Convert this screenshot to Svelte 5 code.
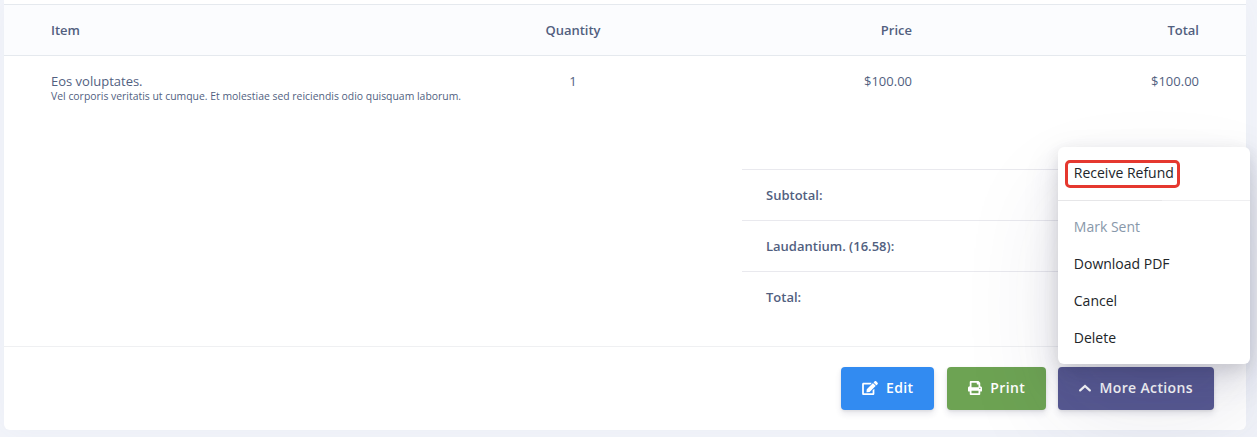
<script>
  const item = {
    name: 'Eos voluptates.',
    description: 'Vel corporis veritatis ut cumque. Et molestiae sed reiciendis odio quisquam laborum.',
    quantity: 1,
    price: '$100.00',
    total: '$100.00'
  };
  const totals = ['Subtotal:', 'Laudantium. (16.58):', 'Total:'];
  const menu = [
    { label: 'Mark Sent', disabled: true },
    { label: 'Download PDF' },
    { label: 'Cancel' },
    { label: 'Delete' }
  ];
</script>

<main>
  <section class="card">
    <div class="row head">
      <span>Item</span>
      <span class="center">Quantity</span>
      <span class="right">Price</span>
      <span class="right">Total</span>
    </div>
    <div class="row body">
      <div>
        <div>{item.name}</div>
        <div class="description">{item.description}</div>
      </div>
      <span class="center">{item.quantity}</span>
      <span class="right">{item.price}</span>
      <span class="right">{item.total}</span>
    </div>

    <div class="totals">
      {#each totals as label}
        <div class="total">{label}</div>
      {/each}
    </div>

    <footer>
      <button class="edit">
        <svg width="16" height="14" viewBox="0 0 576 512"><path fill="currentColor" d="M402.6 83.2l90.2 90.2c3.8 3.8 3.8 10 0 13.8L274.4 405.6l-92.8 10.3c-12.4 1.4-22.9-9.1-21.5-21.5l10.3-92.8L388.8 83.2c3.8-3.8 10-3.8 13.8 0zm162-22.9l-48.8-48.8c-15.2-15.2-39.9-15.2-55.2 0l-35.4 35.4c-3.8 3.8-3.8 10 0 13.8l90.2 90.2c3.8 3.8 10 3.8 13.8 0l35.4-35.4c15.2-15.3 15.2-40 0-55.2zM384 346.2V448H64V128h229.8c3.2 0 6.2-1.3 8.5-3.5l40-40c7.6-7.6 2.2-20.5-8.5-20.5H48C21.5 64 0 85.5 0 112v352c0 26.5 21.5 48 48 48h352c26.5 0 48-21.5 48-48V306.2c0-10.7-12.9-16-20.5-8.5l-40 40c-2.2 2.3-3.5 5.3-3.5 8.5z" /></svg>
        Edit
      </button>
      <button class="print">
        <svg width="14" height="14" viewBox="0 0 512 512"><path fill="currentColor" d="M448 192V77.25c0-8.49-3.37-16.62-9.37-22.63L393.37 9.37c-6-6-14.14-9.37-22.63-9.37H96C78.33 0 64 14.33 64 32v160c-35.35 0-64 28.65-64 64v112c0 8.84 7.16 16 16 16h48v96c0 17.67 14.33 32 32 32h320c17.67 0 32-14.33 32-32v-96h48c8.84 0 16-7.16 16-16V256c0-35.35-28.65-64-64-64zm-64 256H128v-96h256v96zm0-224H128V64h192v48c0 8.84 7.16 16 16 16h48v96zm48 72c-13.25 0-24-10.75-24-24 0-13.26 10.75-24 24-24s24 10.74 24 24c0 13.25-10.75 24-24 24z" /></svg>
        Print
      </button>
      <div class="dropdown">
        <button class="more">
          <svg width="12" height="14" viewBox="0 0 12 14"><path d="M1.2 9.4 6 4.9l4.8 4.5" fill="none" stroke="currentColor" stroke-width="2.2" stroke-linecap="round" stroke-linejoin="miter" /></svg>
          More Actions
        </button>
        <div class="menu">
          <div class="entry"><span class="marked">Receive Refund</span></div>
          <div class="divider"></div>
          {#each menu as entry}
            <div class="entry" class:disabled={entry.disabled}>{entry.label}</div>
          {/each}
        </div>
      </div>
    </footer>
  </section>
</main>

<style>
  :global(body) {
    background: #f2f4fa;
    overflow: hidden;
  }
  main {
    box-sizing: border-box;
    height: 437px;
    padding: 0 11px 7px 4px;
    overflow: hidden;
    font: 13px/19.5px "Open Sans", sans-serif;
    color: #525f7f;
  }
  .card {
    box-sizing: border-box;
    height: 430px;
    padding-top: 4px;
    display: flex;
    flex-direction: column;
    background: #fff;
    border-radius: 0 0 6px 6px;
    box-shadow: 0 0 32px rgba(136, 152, 170, 0.06);
  }
  .row {
    display: grid;
    grid-template-columns: 431px 182px 248px 287px;
    padding: 0 47px;
    box-sizing: border-box;
  }
  .head {
    height: 52px;
    padding-top: 1px;
    flex: none;
    align-items: center;
    background: #fbfcfe;
    border: solid #e5e9ee;
    border-width: 1px 0;
    font-weight: 600;
  }
  .body {
    height: 113px;
    flex: none;
    padding-top: 16px;
  }
  .description {
    margin-top: -2px;
    font-size: 10.42px;
    line-height: 12px;
    white-space: nowrap;
  }
  .center {
    text-align: center;
  }
  .right {
    text-align: right;
  }
  .totals {
    width: 480px;
    margin: 0 24px 0 auto;
    flex: 1;
  }
  .total {
    height: 51px;
    box-sizing: border-box;
    padding: 16px 24px 0;
    border-top: 1px solid #e9e9ee;
    font-weight: 600;
  }
  footer {
    height: 84px;
    box-sizing: border-box;
    border-top: 1px solid #eff0f2;
    padding: 20px 32px 0 0;
    display: flex;
    align-items: flex-start;
    justify-content: flex-end;
  }
  button {
    height: 43px;
    padding: 0 0 2px;
    border: 0;
    border-radius: 4px;
    display: flex;
    align-items: center;
    justify-content: center;
    gap: 8.4px;
    color: #fff;
    font: 600 14px/21px "Open Sans", sans-serif;
    letter-spacing: 0.35px;
    box-shadow: 0 4px 6px rgba(50, 50, 93, 0.11), 0 1px 3px rgba(0, 0, 0, 0.08);
  }
  .edit {
    width: 93px;
    margin-right: 13px;
    background: #328bf1;
  }
  .print {
    width: 99px;
    margin-right: 12px;
    background: #6da353;
  }
  .more {
    width: 156px;
    background: #575992;
  }
  .dropdown {
    position: relative;
  }
  .menu {
    position: absolute;
    left: 0;
    bottom: 46px;
    width: 192px;
    height: 217px;
    box-sizing: border-box;
    padding: 8px 0;
    border-radius: 6px;
    background: #fff;
    box-shadow: 0 50px 100px rgba(50, 50, 93, 0.1), 0 15px 35px rgba(50, 50, 93, 0.15), 0 5px 15px rgba(0, 0, 0, 0.1);
    color: #212529;
    font-size: 14px;
    line-height: 21px;
  }
  .entry {
    height: 37px;
    box-sizing: border-box;
    padding: 8px 15.8px;
  }
  .disabled {
    color: #8898aa;
  }
  .divider {
    height: 1px;
    margin: 8px 0 7px;
    background: linear-gradient(90deg, #e6e6e8 104px, #efeff1 104px);
  }
  .marked {
    display: block;
    box-sizing: border-box;
    width: 115px;
    height: 28px;
    margin: -3px 0 0 -8.8px;
    padding: 0 5.8px;
    border: 3px solid #e5382f;
    border-radius: 5px;
    white-space: nowrap;
    line-height: 20px;
  }
</style>
